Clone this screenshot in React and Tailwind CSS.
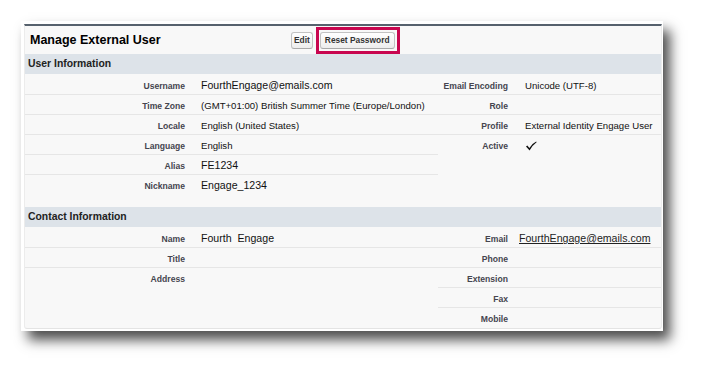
import React from "react";

const userLeft = [
  { label: "Username", value: "FourthEngage@emails.com", big: true },
  { label: "Time Zone", value: "(GMT+01:00) British Summer Time (Europe/London)" },
  { label: "Locale", value: "English (United States)" },
  { label: "Language", value: "English" },
  { label: "Alias", value: "FE1234", big: true },
  { label: "Nickname", value: "Engage_1234", big: true },
];

const userRight = [
  { label: "Email Encoding", value: "Unicode (UTF-8)" },
  { label: "Role", value: "" },
  { label: "Profile", value: "External Identity Engage User" },
  { label: "Active", check: true },
];

const contactLeft = [
  { label: "Name", value: "Fourth\u00a0 Engage", big: true },
  { label: "Title", value: "" },
  { label: "Address", value: "" },
];

const contactRight = [
  { label: "Email", value: "FourthEngage@emails.com", link: true },
  { label: "Phone", value: "" },
  { label: "Extension", value: "" },
  { label: "Fax", value: "" },
  { label: "Mobile", value: "" },
];

const CheckMark = () => (
  <svg width="12" height="10" viewBox="0 0 12 10" className="mt-[2px]">
    <path d="M1 5.6 L2.3 4.6 L4.4 6.9 Q7.2 2.6 11.2 0.6 L11.6 1.2 Q7.6 4 4.6 9.4 Z" fill="#111" />
  </svg>
);

const FieldRow = ({ row, last, labelW, side }) => (
  <div className={`flex h-[20px] ${last ? "" : "border-b border-[#e6e6e6]"}`}>
    <div
      className={`shrink-0 text-right font-bold text-[8.6px] text-[#45454f] pt-[5px] ${
        side === "left" ? "pr-[6px]" : "pr-[5px]"
      }`}
      style={{ width: labelW }}
    >
      {row.label}
    </div>
    <div
      className={`flex-1 text-[#111] ${
        side === "left" ? "pl-[10px]" : row.link ? "pl-[6px]" : "pl-[12px]"
      } ${row.big || row.link ? "text-[10.6px] pt-[3px]" : "text-[9.6px] pt-[4px]"}`}
    >
      {row.check ? (
        <CheckMark />
      ) : row.link ? (
        <span className="underline text-[#222]">{row.value}</span>
      ) : (
        row.value
      )}
    </div>
  </div>
);

const Section = ({ title, left, right }) => (
  <div>
    <div className="h-[20px] bg-[#dde3e9] pl-[3px] flex items-center font-bold text-[10.4px] text-[#222]">
      {title}
    </div>
    <div className="flex pt-[1px]">
      <div className="w-[413px] flex flex-col">
        {left.map((r, i) => (
          <FieldRow key={r.label} row={r} last={i === left.length - 1} labelW="166px" side="left" />
        ))}
      </div>
      <div className="flex-1 flex flex-col">
        {right.map((r, i) => (
          <FieldRow key={r.label} row={r} last={i === right.length - 1} labelW="75px" side="right" />
        ))}
      </div>
    </div>
  </div>
);

export default function App() {
  return (
    <div
      className="w-[703px] h-[366px] bg-white overflow-hidden pt-[21px] pl-[21px]"
      style={{ fontFamily: '"Liberation Sans", Arial, sans-serif' }}
    >
      <div className="w-[642px] h-[310px] bg-white pl-[3px] pr-[1px] pt-[3px] pb-[2px] shadow-[7px_9px_12px_rgba(0,0,0,0.7)]">
        <div className="h-full bg-[#f8f8f8] border-t-2 border-[#56616d] rounded-b-[3px] border-x border-b border-x-[#ececec] border-b-[#e4e4e4]">
          <div className="h-[28px] flex items-center">
            <div className="w-[266px] pl-[5px] font-bold text-[12.5px] text-black">
              Manage External User
            </div>
            <button className="h-[17px] px-[2px] rounded-[3px] border border-[#c2c2c2] border-b-[#a9a9a9] bg-gradient-to-b from-white to-[#ededed] font-bold text-[8.4px] text-[#333]">
              Edit
            </button>
            <div className="ml-[3px] h-[27px] border-[3px] border-[#c8064f] flex items-center pl-[1px] pr-[2px]">
              <button className="h-[17px] px-[4px] rounded-[3px] border border-[#c2c2c2] border-b-[#a9a9a9] bg-gradient-to-b from-white to-[#ededed] font-bold text-[8.4px] text-[#333]">
                Reset Password
              </button>
            </div>
          </div>
          <Section title="User Information" left={userLeft} right={userRight} />
          <div className="h-[12px]" />
          <Section title="Contact Information" left={contactLeft} right={contactRight} />
        </div>
      </div>
    </div>
  );
}
